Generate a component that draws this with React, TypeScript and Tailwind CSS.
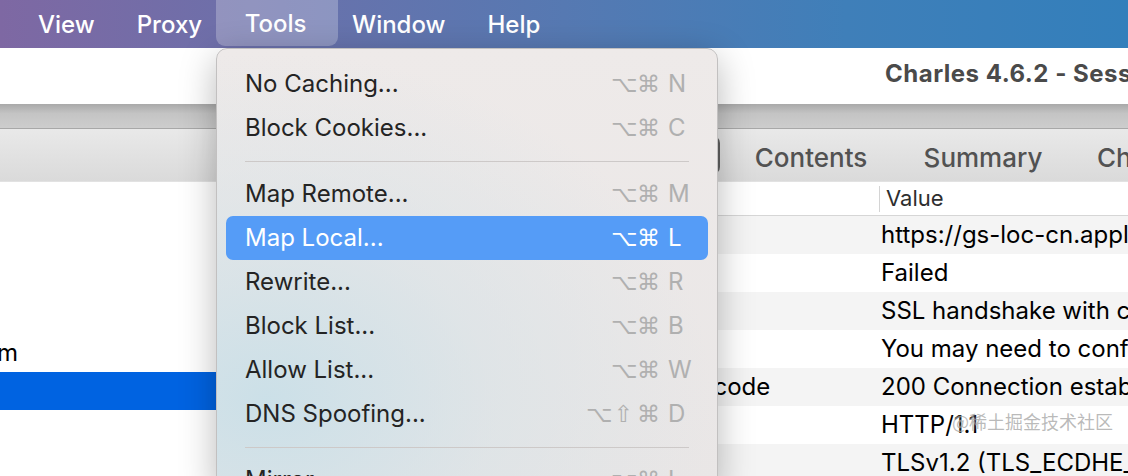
import React from 'react'

interface MenuItem {
  label: string
  mods: string[]
  key: string
  active?: boolean
  sepBefore?: boolean
}

const menuItems: MenuItem[] = [
  { label: 'No Caching...', mods: ['⌥', '⌘'], key: 'N' },
  { label: 'Block Cookies...', mods: ['⌥', '⌘'], key: 'C' },
  { label: 'Map Remote...', mods: ['⌥', '⌘'], key: 'M', sepBefore: true },
  { label: 'Map Local...', mods: ['⌥', '⌘'], key: 'L', active: true },
  { label: 'Rewrite...', mods: ['⌥', '⌘'], key: 'R' },
  { label: 'Block List...', mods: ['⌥', '⌘'], key: 'B' },
  { label: 'Allow List...', mods: ['⌥', '⌘'], key: 'W' },
  { label: 'DNS Spoofing...', mods: ['⌥', '⇧', '⌘'], key: 'D' },
  { label: 'Mirror...', mods: ['⌥', '⌘'], key: 'I', sepBefore: true },
]

const rows = [
  { name: 'URL', value: 'https://gs-loc-cn.apple.com' },
  { name: 'Status', value: 'Failed' },
  { name: 'Failure', value: 'SSL handshake with client failed' },
  { name: 'Notes', value: 'You may need to configure your browser' },
  { name: 'Response code', value: '200 Connection established' },
  { name: 'Protocol', value: 'HTTP/1.1' },
  { name: 'TLS', value: 'TLSv1.2 (TLS_ECDHE_RSA_WITH_AES_128_GCM)' },
]

const MenuBar: React.FC = () => {
  const items = ['View', 'Proxy', 'Tools', 'Window', 'Help']
  return (
    <div className="h-[48px] flex items-stretch pl-[17px] text-white text-[24px] font-medium bg-[linear-gradient(90deg,#7e68a3_0%,#6a71ab_25%,#5679b2_50%,#3f7fb9_75%,#337fbb_100%)]">
      {items.map((it) =>
        it === 'Tools' ? (
          <div
            key={it}
            className="-mx-[7px] w-[122px] shrink-0 flex items-center justify-center pt-[2px] pr-[3px] rounded-b-[9px] bg-white/25 mb-[2px]"
          >
            {it}
          </div>
        ) : (
          <div key={it} className="px-[21px] shrink-0 flex items-center pt-[2px]">
            {it}
          </div>
        )
      )}
    </div>
  )
}

const ToolsMenu: React.FC = () => {
  return (
    <div className="absolute left-[216px] top-[48px] w-[502px] h-[440px] rounded-t-[11px] border border-[#c2c0c0] shadow-[0_10px_36px_rgba(0,0,0,0.28)] bg-[radial-gradient(ellipse_at_10%_80%,rgba(200,223,232,0.9)_0%,rgba(214,226,231,0.55)_35%,rgba(236,232,231,0)_70%),linear-gradient(180deg,#eeeae9,#e9e6e6)] pt-[13px]">
      {menuItems.map((m) => (
        <React.Fragment key={m.label}>
          {m.sepBefore && (
            <div className="h-[22px] flex items-center px-[28px]">
              <div className="h-px w-full bg-[#cdc9c8]" />
            </div>
          )}
          <div
            className={
              'h-[44px] mx-[9px] pl-[19px] pr-[16px] flex items-center rounded-[7px] ' +
              (m.active ? 'bg-[#559cf7] text-white' : 'text-[#242424]')
            }
          >
            <span className="flex-1 text-[24px]">{m.label}</span>
            <span
              className={
                'flex items-center font-["DejaVu_Sans",sans-serif] text-[23px] leading-none ' +
                (m.active ? 'text-white' : 'text-[#b0b0b0]')
              }
            >
              {m.mods.map((k, i) => (
                <span key={i} className="w-[25px] text-center">
                  {k}
                </span>
              ))}
              <span className="w-[24px] ml-[7px] font-['Inter',sans-serif] text-[24px]">{m.key}</span>
            </span>
          </div>
        </React.Fragment>
      ))}
    </div>
  )
}

const App: React.FC = () => {
  return (
    <div className="relative w-[1128px] h-[476px] overflow-hidden bg-white font-['Inter',sans-serif]">
      <MenuBar />
      <div className="h-[56px] bg-white flex items-center pl-[885px] pb-[4px]">
        <span className="text-[24px] font-bold tracking-[0.5px] text-[#4a4a4a] whitespace-nowrap">
          Charles 4.6.2 - Session 1 *
        </span>
      </div>
      <div className="h-[25px] bg-[linear-gradient(180deg,#a9a9a9,#c4c4c4_40%,#cdcdcd)] border-b border-[#a8a8a8]" />
      <div className="h-[53px] bg-[linear-gradient(180deg,#e9e9e9,#dadada)] border-b border-[#e2e2e2] flex items-center pl-[548px] pt-[4px] text-[26px] font-medium text-[#525252] whitespace-nowrap">
        <div className="w-[172px] shrink-0 h-[38px] -mt-[4px] rounded-r-[7px] border-r-[3px] border-[#616161] bg-[#d2d2d2]" />
        <div className="w-[172px] shrink-0 ml-[5px] text-center">Contents</div>
        <div className="w-[172px] shrink-0 text-center">Summary</div>
        <div className="shrink-0 pl-[28px]">Chart</div>
      </div>
      <div className="flex">
        <div className="w-[586px] shrink-0 text-[24px] text-black">
          <div className="h-[152px]" />
          <div className="h-[38px] flex items-center overflow-hidden">
            <span className="-ml-[3px]">m</span>
          </div>
          <div className="h-[38px] bg-[#0063e1]" />
        </div>
        <div className="flex-1 min-w-0 text-[24px] text-black whitespace-nowrap overflow-hidden">
          <div className="h-[34px] flex items-center border-b border-[#d6d6d6] text-[22px] text-[#2e2e2e]">
            <div className="w-[293px] shrink-0 pl-[7px]">Name</div>
            <div className="w-px shrink-0 h-[26px] bg-[#d4d4d4]" />
            <div className="pl-[6px]">Value</div>
          </div>
          {rows.map((r, i) => (
            <div
              key={r.name}
              className={'h-[38px] flex items-center ' + (i % 2 === 0 ? 'bg-[#f4f4f4]' : 'bg-white')}
            >
              <div className="w-[293px] shrink-0 pl-[9px]">{r.name}</div>
              <div className="pl-[2px] shrink-0">{r.value}</div>
            </div>
          ))}
        </div>
      </div>
      <ToolsMenu />
      <div className="absolute left-[952px] top-[408px] text-[18px] text-[rgba(140,140,140,0.6)] font-['Noto_Sans_CJK_SC',sans-serif] [text-shadow:0_0_2px_rgba(255,255,255,0.9)]">
        @稀土掘金技术社区
      </div>
    </div>
  )
}

export default App
